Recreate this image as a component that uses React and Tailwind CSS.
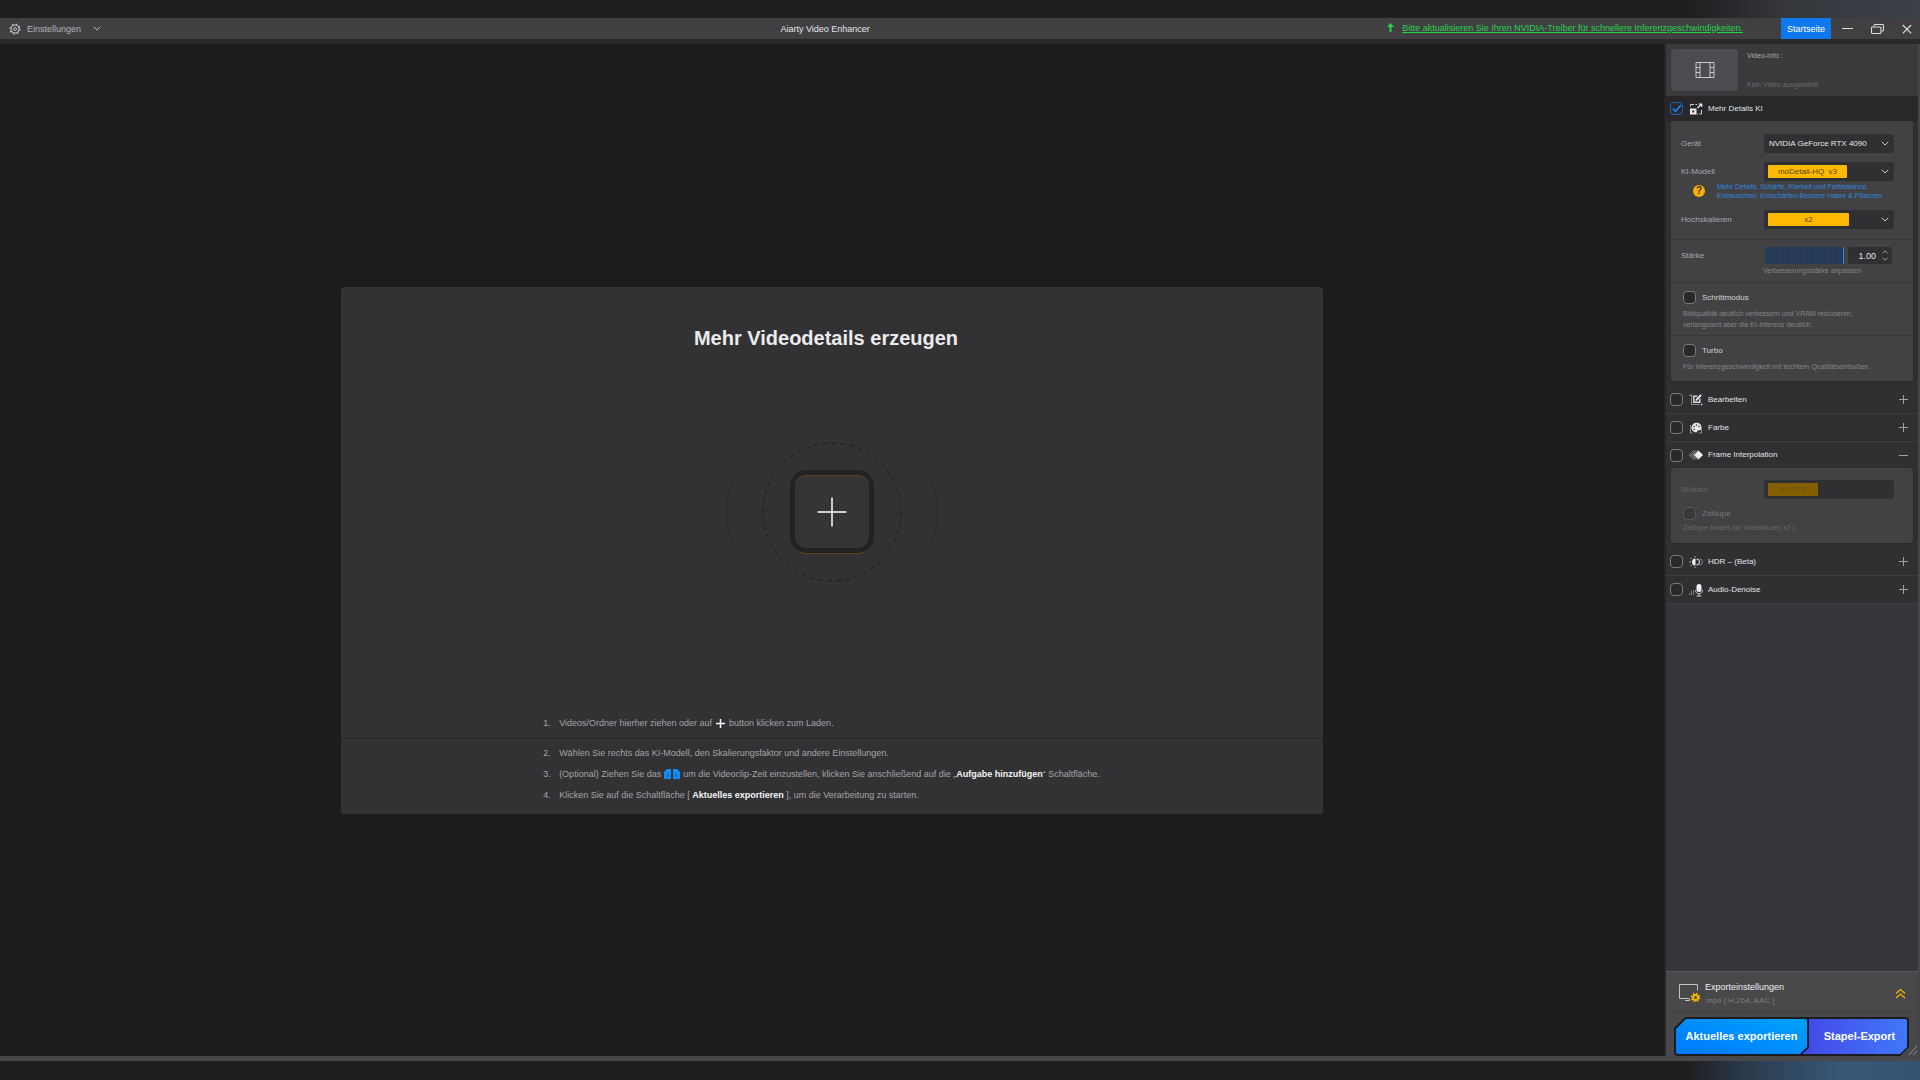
import React, { useState } from "react";

const Chevron = ({ className }) => (
  <svg className={className} viewBox="0 0 8 5" fill="none" stroke="currentColor" aria-hidden="true">
    <path d="M0.7 0.7 4 4 7.3 0.7" />
  </svg>
);

const GearIcon = () => (
  <svg className="h-3 w-3" viewBox="0 0 12 12" fill="none" stroke="#c4c4c6" aria-hidden="true">
    <circle cx="6" cy="6" r="4" strokeWidth="1.1" />
    <circle cx="6" cy="6" r="1.5" strokeWidth="0.9" />
    <circle cx="6" cy="6" r="5" strokeWidth="1.2" strokeDasharray="1.7 2.227" />
  </svg>
);

const FilmIcon = () => (
  <svg className="h-4 w-5" viewBox="0 0 20 16" fill="none" stroke="#c8c8ca" aria-hidden="true">
    <path d="M1 .5h18v15H1zM5 .5v15M15 .5v15M1 5.5h4M1 10.5h4M15 5.5h4M15 10.5h4" />
  </svg>
);

const DetailIcon = () => (
  <svg className="h-3 w-3.5" viewBox="0 0 14 12" aria-hidden="true">
    <path d="M1.5 3.5V1.500H5M6.500 1.500H8M12.500 7v4h-2M9 11H8" fill="none" stroke="#d2d2d4" />
    <path d="M1 5.500h6.500V11.500H1zM3.200 7.500v2h2v-2z" fill="#ededee" fillRule="evenodd" />
    <path d="M8.500 5 12 1.500M9.800 1h2.900v3" fill="none" stroke="#ededee" strokeWidth="1.2" />
  </svg>
);

const EditIcon = () => (
  <svg className="h-3 w-3.5" viewBox="0 0 14 12" aria-hidden="true">
    <path d="M0 1.500h2M2.500 0v10.500H11M12.500 9v3M12 10.500h2" fill="none" stroke="#8c8c8e" />
    <path d="M4 1.500h5L7.500 3H5.500v4.500h4.500V5.500L11.500 4v5H4z" fill="#d8d8da" />
    <path d="m6.500 7 .3-2L11.500.3l1.300 1.300L8.200 6.500z" fill="#ededee" />
  </svg>
);

const ColorIcon = () => (
  <svg className="h-3 w-3.5" viewBox="0 0 14 12" aria-hidden="true">
    <path d="M1.500 3v8h2M12.500 7v4h-3" fill="none" stroke="#8c8c8e" />
    <path d="M7.500.8a5 4.800 0 0 0-5 4.800c0 3 2.500 5 4.700 4.900 1.200 0 .7-1.300 1.300-1.900.8-.8 3.900.4 4-2.700C12.600 2.700 10.300.8 7.500.8z" fill="#e9e9ea" />
    <g fill="#303033">
      <circle cx="5" cy="4.500" r=".8" />
      <circle cx="7.500" cy="3" r=".8" />
      <circle cx="10" cy="4.500" r=".8" />
      <circle cx="5.300" cy="7.300" r=".8" />
    </g>
  </svg>
);

const FrameIcon = () => (
  <svg className="h-3 w-3.5" viewBox="0 0 14 12" aria-hidden="true">
    <path d="M4.500 1.500 0.500 6l4 4.500M6.500 1.500 2.500 6l4 4.500M8 1.500 4 6l4 4.500" fill="none" stroke="#858587" />
    <path d="M9.500 1.500 14 6l-4.500 4.500L5 6z" fill="#ededee" />
  </svg>
);

const HdrIcon = () => (
  <svg className="h-3 w-3.5" viewBox="0 0 14 12" aria-hidden="true">
    <path d="M6.500 2.500a3.500 3.500 0 0 0 0 7z" fill="#ededee" />
    <path d="M7.500 3a3 3 0 0 1 0 6" fill="none" stroke="#ededee" />
    <path d="M6 .2v1.300M6 10.500v1.300M.3 6h1.500M1.600 2l1 1M1.600 10l1-1" stroke="#c4c4c6" />
    <path d="M10.500 3a3 3 0 1 1 0 6" fill="none" stroke="#858587" />
  </svg>
);

const MicIcon = () => (
  <svg className="h-3.5 w-3.5" viewBox="0 0 14 14" aria-hidden="true">
    <path d="M.5 12v-2M2.500 12V8M4.500 12V7" stroke="#77777a" />
    <rect x="7.500" y="1" width="5" height="8" rx="2.500" fill="#f2f2f3" />
    <path d="M6.500 7c0 5 7 5 7 0M10 10.500v2.500M7.500 13h5" fill="none" stroke="#c8c8ca" />
  </svg>
);

const ExportIcon = () => (
  <svg className="h-[19px] w-[22px]" viewBox="0 0 22 19" aria-hidden="true">
    <path d="M10 14.500H.5V.5h18v6M6 16.500h4.500v-2" fill="none" stroke="#c4c4c6" />
    <circle cx="16.500" cy="13.500" r="2.500" fill="none" stroke="#f5b800" strokeWidth="2" />
    <circle cx="16.500" cy="13.500" r="4" fill="none" stroke="#f5b800" strokeWidth="1.600" strokeDasharray="1.570 1.570" />
  </svg>
);

const PlusMinus = ({ open }) => (
  <svg className="h-[9px] w-[9px]" viewBox="0 0 9 9" stroke="#a0a0a2" aria-hidden="true">
    <path d={open ? "M0 4.500h9" : "M0 4.500h9M4.500 0v9"} />
  </svg>
);

const CheckBox = ({ id, checked, onChange, disabled }) => (
  <span className="grid h-[13px] w-[13px] shrink-0">
    <input
      id={id}
      type="checkbox"
      checked={checked}
      onChange={onChange}
      disabled={disabled}
      className="col-start-1 row-start-1 h-[13px] w-[13px] appearance-none rounded-[4px] border border-[#7b7b7d] bg-[#29292b] checked:border-[#1265c4]"
    />
    {checked && (
      <svg className="pointer-events-none col-start-1 row-start-1 h-[13px] w-[13px]" viewBox="0 0 13 13" fill="none" stroke="#1e88ff" strokeWidth="1.500" aria-hidden="true">
        <path d="m3 6.500 2.500 2.800L11 3" />
      </svg>
    )}
  </span>
);

const SectionHead = ({ id, title, icon, className, open, main }) => {
  const [checked, setChecked] = useState(!!main);

  return (
    <div className={`flex items-center pr-2.5 pl-1 ${className}`}>
      <CheckBox id={id} checked={checked} onChange={() => setChecked(!checked)} />
      <span className="ml-1.5 w-[19px]">{icon}</span>
      <label htmlFor={id} className="flex-1 text-[#e2e2e4]">
        {title}
      </label>
      {!main && (
        <button type="button" aria-label={title}>
          <PlusMinus open={open} />
        </button>
      )}
    </div>
  );
};

const Toggle = ({ id, label, disabled }) => {
  const [checked, setChecked] = useState(false);

  return (
    <div className="flex items-center gap-1.5">
      <CheckBox id={id} checked={checked} disabled={disabled} onChange={() => setChecked(!checked)} />
      <label htmlFor={id} className="leading-[13px] text-[#d4d4d6]">
        {label}
      </label>
    </div>
  );
};

const Field = ({ id, label, children }) => (
  <div className="flex items-center pr-[19px] pl-2.5">
    <label htmlFor={id} className="flex-1 text-[#a8a8aa]">
      {label}
    </label>
    <div className="flex h-[19px] w-[130px] items-center justify-between rounded-[3px] bg-[#303032] pr-[5px] pl-1">
      {children}
    </div>
  </div>
);

const selectStyle = "h-[13px] appearance-none rounded-[1px] bg-[#ffba00] text-center leading-[13px] text-[#5a4300] [text-align-last:center]";

const TitleBar = () => (
  <header className="flex h-[21px] items-center bg-[#404042] text-[9px] leading-[12px]">
    <div className="w-[263px] pl-[9px]">
      <button type="button" className="flex items-center text-[#b4b4b6]">
        <GearIcon />
        <span className="ml-1.5">Einstellungen</span>
        <Chevron className="ml-3 h-[5px] w-2" />
      </button>
    </div>
    <h1 className="flex-1 text-center text-[#e6e6e8]">Aiarty Video Enhancer</h1>
    <a href="#driver" className="mr-[38px] flex items-center gap-2 pb-0.5 text-[#27d34d]">
      <svg className="h-[9px] w-[7px]" viewBox="0 0 7 9" fill="currentColor" aria-hidden="true">
        <path d="M3.500 0 7 4H4.500v5h-2V4H0z" />
      </svg>
      <span className="underline">Bitte aktualisieren Sie Ihren NVIDIA-Treiber für schnellere Inferenzgeschwindigkeiten.</span>
    </a>
    <button type="button" className="h-full w-[50px] bg-[#0f78ee] text-white">
      Startseite
    </button>
    <div className="flex items-center gap-[18px] pr-2 pl-[11px] text-[#dcdcde]">
      <button type="button" aria-label="Minimieren">
        <svg className="h-3 w-[11px]" viewBox="0 0 11 12" stroke="currentColor">
          <path d="M0 5.500h11" />
        </svg>
      </button>
      <button type="button" aria-label="Wiederherstellen">
        <svg className="h-3 w-[13px]" viewBox="0 0 13 12" fill="none" stroke="currentColor" strokeWidth="1.100">
          <rect x=".5" y="4" width="9.500" height="6.500" rx="1" />
          <path d="M3 3.500V2.500a1 1 0 0 1 1-1h7.500a1 1 0 0 1 1 1V7a1 1 0 0 1-1 1H10.500" />
        </svg>
      </button>
      <button type="button" aria-label="Schließen">
        <svg className="h-3 w-[10px]" viewBox="0 0 10 12" stroke="currentColor" strokeWidth="1.200">
          <path d="m.8 2 8.400 8.400M9.200 2 .8 10.400" />
        </svg>
      </button>
    </div>
  </header>
);

const Step = ({ number, children }) => (
  <li className="flex">
    <span className="w-4 shrink-0">{number}.</span>
    <span>{children}</span>
  </li>
);

const DropPanel = () => (
  <section className="w-[59%] rounded-[3px] bg-[#323234] text-[9px] leading-[21px] text-[#a4a4a6]">
    <div className="pt-[39px] pb-1">
      <h2 className="pr-3 text-center text-[20px] leading-6 font-bold text-[#ebebed]">Mehr Videodetails erzeugen</h2>
      <div className="mt-[92px] grid place-items-center">
        <svg className="col-start-1 row-start-1 h-[140px] w-[212px]" viewBox="0 0 212 140" fill="none" aria-hidden="true">
          <circle cx="106" cy="70" r="69" stroke="#1f1f21" strokeDasharray="5 4" />
          <path d="M11 25A105 105 0 0 0 11 115M201 25A105 105 0 0 1 201 115" stroke="#2a2a2c" />
        </svg>
        <button
          type="button"
          aria-label="Videos laden"
          className="col-start-1 row-start-1 grid h-[84px] w-[84px] place-items-center rounded-2xl border-b border-[#59421f] bg-[#222224] p-[5px]"
        >
          <span className="grid h-full w-full place-items-center rounded-[11px] border-t border-[#59421f] bg-[#343436]">
            <svg className="h-[30px] w-[30px]" viewBox="0 0 30 30" stroke="#fff" strokeWidth="1.500">
              <path d="M.5 15h29M15 .5v29" />
            </svg>
          </span>
        </button>
      </div>
      <ol className="mt-[131px] pl-[202px]">
        <Step number={1}>
          Videos/Ordner hierher ziehen oder auf
          <svg className="mx-1 inline h-[9px] w-[9px]" viewBox="0 0 9 9" stroke="#f4f4f5" strokeWidth="1.500" aria-hidden="true">
            <path d="M0 4.500h9M4.500 0v9" />
          </svg>
          button klicken zum Laden.
        </Step>
      </ol>
    </div>
    <ol className="border-t border-[#262628] pt-1 pb-2 pl-[202px]">
      <Step number={2}>Wählen Sie rechts das KI-Modell, den Skalierungsfaktor und andere Einstellungen.</Step>
      <Step number={3}>
        (Optional) Ziehen Sie das
        <svg className="mx-[3px] inline h-2.5 w-4" viewBox="0 0 16 10" aria-hidden="true">
          <path d="M0 3l3-3h4v10H0zM9 0h4l3 3v7H9z" fill="#168cf5" />
          <path d="M4.500 4v4M3.500 6v2M11.500 4v4M12.500 6v2" fill="none" stroke="#0f6cc2" />
        </svg>
        um die Videoclip-Zeit einzustellen, klicken Sie anschließend auf die „
        <strong className="text-[#f4f4f5]">Aufgabe hinzufügen</strong>“ Schaltfläche.
      </Step>
      <Step number={4}>
        Klicken Sie auf die Schaltfläche [ <strong className="text-[#f4f4f5]">Aktuelles exportieren</strong> ], um die
        Verarbeitung zu starten.
      </Step>
    </ol>
  </section>
);

const VideoInfo = () => (
  <div className="flex h-[52px] gap-[9px] bg-[#3a3a3c] px-[5px] pt-[5px] text-[7px] leading-[14px]">
    <div className="grid h-[42px] w-[67px] place-items-center rounded-[3px] bg-[#4b4b50]">
      <FilmIcon />
    </div>
    <div className="flex h-[43px] flex-col justify-between">
      <p className="text-[#aaaaac]">Video-Info :</p>
      <p className="text-[#6c6c6e]">Kein Video ausgewählt</p>
    </div>
  </div>
);

const DetailSettings = () => {
  const [strength, setStrength] = useState(100);
  const step = (n) => setStrength((s) => Math.min(100, Math.max(0, s + n)));

  return (
    <div className="mx-[5px] mb-[5px] rounded-[3px] bg-[#424245] pt-[13px] pb-[9px] shadow-sm">
      <Field id="device" label="Gerät">
        <select id="device" className="w-[110px] appearance-none bg-transparent pl-px text-[#e6e6e8]">
          <option>NVIDIA GeForce RTX 4090</option>
        </select>
        <Chevron className="h-[5px] w-2 text-[#c8c8ca]" />
      </Field>
      <div className="mt-[9px]">
        <Field id="model" label="KI-Modell">
          <select id="model" className={`w-[79px] ${selectStyle}`}>
            <option>moDetail-HQ&nbsp; v3</option>
          </select>
          <Chevron className="h-[5px] w-2 text-[#c8c8ca]" />
        </Field>
      </div>
      <div className="mt-px mb-2.5 flex items-center gap-3 pl-[22px]">
        <button type="button" aria-label="Hilfe" className="h-3 w-3 rounded-full bg-[#fbb000] text-[10px] leading-3 font-bold text-[#3b3220]">
          ?
        </button>
        <p className="text-[7px] leading-[9px] whitespace-nowrap text-[#2f86dc]">
          Mehr Details, Schärfe, Klarheit und Farbbalance.
          <br />
          Entrauschen, Entschärfen.Bessere Haare &amp; Pflanzen.
        </p>
      </div>
      <Field id="scale" label="Hochskalieren">
        <select id="scale" className={`w-[81px] ${selectStyle}`}>
          <option>x2</option>
        </select>
        <Chevron className="h-[5px] w-2 text-[#c8c8ca]" />
      </Field>

      <div className="mt-2.5 border-t border-[#38383a] pt-[7px] pb-1.5">
        <div className="flex items-center pr-[21px] pl-2.5">
          <label htmlFor="strength" className="flex-1 text-[#a8a8aa]">
            Stärke
          </label>
          <input
            id="strength"
            type="range"
            min="0"
            max="100"
            value={strength}
            onChange={(e) => setStrength(Number(e.target.value))}
            className="h-[17px] w-[79px] appearance-none bg-[#273c58] bg-[repeating-linear-gradient(90deg,transparent_0_5px,#23354e_5px_6px)] [&::-webkit-slider-thumb]:h-[17px] [&::-webkit-slider-thumb]:w-px [&::-webkit-slider-thumb]:appearance-none [&::-webkit-slider-thumb]:bg-[#2b8cff]"
          />
          <div className="ml-1 flex h-[17px] w-[44px] items-center justify-between rounded-[3px] bg-[#303032] pr-1 pl-2">
            <input
              type="text"
              aria-label="Stärke"
              readOnly
              value={(strength / 100).toFixed(2)}
              className="w-5 text-right text-[9px] text-[#e0e0e2]"
            />
            <div className="flex flex-col gap-[3px] text-[#c8c8ca]">
              <button type="button" aria-label="Erhöhen" onClick={() => step(1)}>
                <Chevron className="h-1 w-1.5 rotate-180" />
              </button>
              <button type="button" aria-label="Verringern" onClick={() => step(-1)}>
                <Chevron className="h-1 w-1.5" />
              </button>
            </div>
          </div>
        </div>
        <p className="mt-0.5 pl-[92px] text-[7px] leading-[10px] text-[#858587]">Verbesserungsstärke anpassen</p>
      </div>

      <div className="border-t border-[#38383a] px-3 pt-2 pb-[5px]">
        <Toggle id="step-mode" label="Schrittmodus" />
        <p className="mt-1 text-[7px] leading-[11px] text-[#858587]">
          Bildqualität deutlich verbessern und VRAM reduzieren,
          <br />
          verlangsamt aber die KI-Inferenz deutlich.
        </p>
      </div>

      <div className="border-t border-[#38383a] px-3 pt-2">
        <Toggle id="turbo" label="Turbo" />
        <p className="mt-1 text-[7px] leading-[11px] text-[#858587]">
          Für Inferenzgeschwindigkeit mit leichtem Qualitätseinbußen.
        </p>
      </div>
    </div>
  );
};

const FrameSettings = () => (
  <div className="mx-[5px] mb-[5px] rounded-[3px] bg-[#424245] pt-3 pb-[9px] shadow-sm">
    <div className="flex items-center pr-[19px] pl-2.5">
      <label htmlFor="fps" className="flex-1 text-[#616163]">
        Bildrate
      </label>
      <div className="flex h-[19px] w-[130px] items-center rounded-[3px] bg-[#303032] px-1">
        <select
          id="fps"
          disabled
          className="h-[13px] w-[50px] appearance-none bg-[#835f00] text-center leading-[13px] text-[#6b4f0a] opacity-100 [text-align-last:center]"
        >
          <option>25 FPS</option>
        </select>
      </div>
    </div>
    <div className="mt-2 px-3 opacity-35">
      <Toggle id="slow" label="Zeitlupe" disabled />
      <p className="mt-0.5 text-[7px] leading-[12px] text-[#a8a8aa]">Zeitlupe ändert die Videodauer( x2 )</p>
    </div>
  </div>
);

const ExportPanel = () => (
  <footer className="border-t border-[#5a5a5c] bg-[#48484a] pl-2">
    <div className="mr-2 flex h-10 items-center border-b border-[#3e3e40] pt-[3px] pr-1 pl-[5px]">
      <ExportIcon />
      <div className="ml-1 flex-1 pt-0.5">
        <p className="text-[9px] leading-[13px] text-[#f0f0f2]">Exporteinstellungen</p>
        <p className="pl-px leading-[14px] text-[#7c7c7e]">mp4 [ H.264, AAC ]</p>
      </div>
      <button type="button" aria-label="Exporteinstellungen öffnen">
        <svg className="h-[11px] w-[11px]" viewBox="0 0 11 11" fill="none" stroke="#f5b800" strokeWidth="1.200">
          <path d="m1 5.500 4.500-4 4.500 4M1 10l4.500-4 4.500 4" />
        </svg>
      </button>
    </div>
    <div className="flex items-end pt-[5px]">
      <div className="flex h-[39px] w-[235px] shrink-0 rounded-[4px] bg-[#1c1c20] p-0.5 text-[11px] leading-[35px] font-bold text-white [clip-path:polygon(11px_0,100%_0,100%_30px,226px_100%,0_100%,0_11px)]">
        <button
          type="button"
          className="w-[131px] rounded-[2px] bg-gradient-to-tr from-[#0078ff] to-[#00a2fa] [clip-path:polygon(10px_0,100%_0,100%_28px,124px_100%,0_100%,0_10px)]"
        >
          Aktuelles exportieren
        </button>
        <button
          type="button"
          className="-ml-[5px] flex-1 rounded-[2px] bg-gradient-to-r from-[#4546e6] to-[#3f78fb] pl-2.5 [clip-path:polygon(7px_0,100%_0,100%_28px,98px_100%,0_100%,7px_29px)]"
        >
          Stapel-Export
        </button>
      </div>
      <svg className="h-3 w-2 shrink-0" viewBox="0 0 8 12" stroke="#8a8a8c" aria-hidden="true">
        <path d="m0 11 8-9M4 11l4-4" />
      </svg>
    </div>
  </footer>
);

const Sidebar = () => (
  <aside className="flex w-[254px] shrink-0 flex-col border-r-2 border-[#454547] bg-[#35353a] text-[8px] leading-[12px]">
    <VideoInfo />
    <div className="bg-[#303033]">
      <SectionHead id="details" title="Mehr Details KI" icon={<DetailIcon />} className="h-[25px] bg-[#28282a]" main />
      <DetailSettings />
      <SectionHead id="edit" title="Bearbeiten" icon={<EditIcon />} className="h-7 border-b border-[#3e3e40]" />
      <SectionHead id="color" title="Farbe" icon={<ColorIcon />} className="h-7 border-b border-[#3e3e40]" />
      <SectionHead id="frames" title="Frame Interpolation" icon={<FrameIcon />} className="h-[26px]" open />
      <FrameSettings />
      <SectionHead id="hdr" title="HDR – (Beta)" icon={<HdrIcon />} className="h-7 border-b border-[#3e3e40]" />
      <SectionHead id="audio" title="Audio-Denoise" icon={<MicIcon />} className="h-7 border-b border-[#3e3e40]" />
    </div>
    <div className="flex-1" />
    <ExportPanel />
  </aside>
);

const App = () => (
  <div className="flex h-screen flex-col bg-[#1f1f21] font-['Liberation_Sans',Arial,sans-serif]">
    <div className="h-[18px] bg-[linear-gradient(90deg,#1f1f21_88%,#34363a_93%,#3c4148_100%)]" />
    <TitleBar />
    <div className="h-[5px] bg-[#29292b]" />
    <div className="flex min-h-0 flex-1">
      <main className="flex flex-1 items-center justify-center border-r-2 border-[#252527] bg-[#1c1c1e]">
        <DropPanel />
      </main>
      <Sidebar />
    </div>
    <div className="h-[5px] bg-[#48484a]" />
    <div className="h-[19px] bg-[linear-gradient(90deg,#1f1f21_88%,#2b3b4e_91%,#385878_96%,#365273_100%)]" />
  </div>
);

export default App;
